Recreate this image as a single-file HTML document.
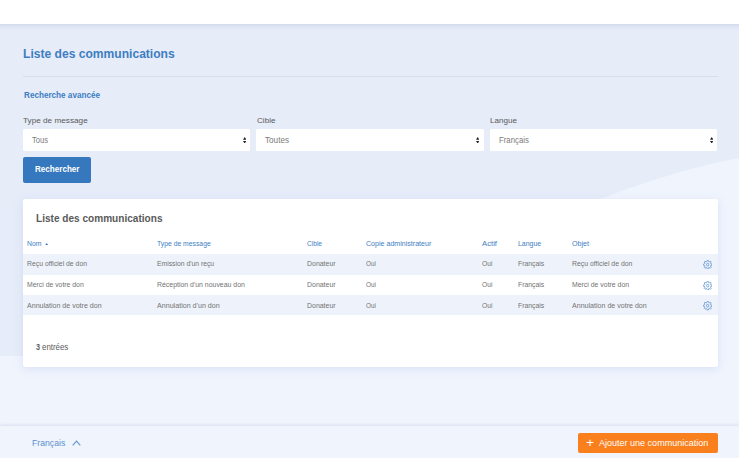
<!DOCTYPE html>
<html lang="fr">
<head>
<meta charset="utf-8">
<title>Liste des communications</title>
<style>
*{box-sizing:border-box;margin:0;padding:0}
html,body{width:739px;height:458px;overflow:hidden}
body{font-family:"Liberation Sans",sans-serif;background:#f0f4fd;position:relative}
.top{position:absolute;left:-10px;top:0;width:760px;height:23.8px;background:#fff;box-shadow:0 1px 5px rgba(120,140,180,.28)}
.dark{position:absolute;left:0;top:24px;width:739px;height:332px;background:#e6ecf8}
.curve{position:absolute;left:0;top:0;width:739px;height:458px}
.hr{position:absolute;left:23px;top:76px;width:695px;height:1px;background:#d8dfeb}
.sel{position:absolute;top:128.8px;height:22.2px;width:227.3px;background:#fff;border-radius:1.5px}
.arr{position:absolute;top:136.9px}
.btn{position:absolute;left:23px;top:157px;width:68px;height:26px;background:#3578bd;border-radius:2px}
.card{position:absolute;left:23px;top:199px;width:694.8px;height:167.5px;background:#fff;border-radius:2px;box-shadow:0 2px 8px rgba(150,170,225,.26)}
.row{position:absolute;left:23px;width:694.8px;height:20.5px;background:#eef2fb}
.gear{position:absolute;left:702.8px}
.footer{position:absolute;left:0;top:426px;width:739px;height:32px;background:#f0f4fd;box-shadow:0 -1px 3px rgba(120,140,180,.2)}
.add{position:absolute;left:578px;top:432.5px;width:140px;height:20.3px;background:#f9801d;border-radius:2px}
.t{position:absolute;white-space:nowrap;transform-origin:0 50%;display:block}
</style>
</head>
<body>
<div class="dark"></div>
<svg class="curve" viewBox="0 0 739 458"><path d="M600 199 C 650 180, 700 165, 739 158 L739 356 L600 356 Z" fill="#f0f4fd"/></svg>
<div class="top"></div>
<div class="hr"></div>
<div class="sel" style="left:23px"></div>
<div class="sel" style="left:256.4px"></div>
<div class="sel" style="left:489.9px"></div>
<svg class="arr" style="left:242.8px" width="3.4" height="6.6" viewBox="0 0 4 7" preserveAspectRatio="none"><path d="M0 2.8L2 0L4 2.8ZM0 4.2L2 7L4 4.2Z" fill="#222"/></svg>
<svg class="arr" style="left:475.9px" width="3.4" height="6.6" viewBox="0 0 4 7" preserveAspectRatio="none"><path d="M0 2.8L2 0L4 2.8ZM0 4.2L2 7L4 4.2Z" fill="#222"/></svg>
<svg class="arr" style="left:709.8px" width="3.4" height="6.6" viewBox="0 0 4 7" preserveAspectRatio="none"><path d="M0 2.8L2 0L4 2.8ZM0 4.2L2 7L4 4.2Z" fill="#222"/></svg>
<div class="btn"></div>
<div class="card"></div>
<div class="row" style="top:254.1px"></div>
<div class="row" style="top:294.9px"></div>
<svg class="gear" style="top:260.1px" width="9.4" height="9.4" viewBox="0 0 24 24" fill="none" stroke="#4a88c8" stroke-width="1.7" stroke-linejoin="round"><ellipse cx="12" cy="12" rx="3" ry="3.4"/><path d="M9.56 4.49 L10.67 0.78 L13.33 0.78 L14.44 4.49 L15.59 4.96 L19.00 3.13 L20.87 5.00 L19.04 8.41 L19.51 9.56 L23.22 10.67 L23.22 13.33 L19.51 14.44 L19.04 15.59 L20.87 19.00 L19.00 20.87 L15.59 19.04 L14.44 19.51 L13.33 23.22 L10.67 23.22 L9.56 19.51 L8.41 19.04 L5.00 20.87 L3.13 19.00 L4.96 15.59 L4.49 14.44 L0.78 13.33 L0.78 10.67 L4.49 9.56 L4.96 8.41 L3.13 5.00 L5.00 3.13 L8.41 4.96Z"/></svg>
<svg class="gear" style="top:280.8px" width="9.4" height="9.4" viewBox="0 0 24 24" fill="none" stroke="#4a88c8" stroke-width="1.7" stroke-linejoin="round"><ellipse cx="12" cy="12" rx="3" ry="3.4"/><path d="M9.56 4.49 L10.67 0.78 L13.33 0.78 L14.44 4.49 L15.59 4.96 L19.00 3.13 L20.87 5.00 L19.04 8.41 L19.51 9.56 L23.22 10.67 L23.22 13.33 L19.51 14.44 L19.04 15.59 L20.87 19.00 L19.00 20.87 L15.59 19.04 L14.44 19.51 L13.33 23.22 L10.67 23.22 L9.56 19.51 L8.41 19.04 L5.00 20.87 L3.13 19.00 L4.96 15.59 L4.49 14.44 L0.78 13.33 L0.78 10.67 L4.49 9.56 L4.96 8.41 L3.13 5.00 L5.00 3.13 L8.41 4.96Z"/></svg>
<svg class="gear" style="top:301.4px" width="9.4" height="9.4" viewBox="0 0 24 24" fill="none" stroke="#4a88c8" stroke-width="1.7" stroke-linejoin="round"><ellipse cx="12" cy="12" rx="3" ry="3.4"/><path d="M9.56 4.49 L10.67 0.78 L13.33 0.78 L14.44 4.49 L15.59 4.96 L19.00 3.13 L20.87 5.00 L19.04 8.41 L19.51 9.56 L23.22 10.67 L23.22 13.33 L19.51 14.44 L19.04 15.59 L20.87 19.00 L19.00 20.87 L15.59 19.04 L14.44 19.51 L13.33 23.22 L10.67 23.22 L9.56 19.51 L8.41 19.04 L5.00 20.87 L3.13 19.00 L4.96 15.59 L4.49 14.44 L0.78 13.33 L0.78 10.67 L4.49 9.56 L4.96 8.41 L3.13 5.00 L5.00 3.13 L8.41 4.96Z"/></svg>
<svg style="position:absolute;left:44.6px;top:243.2px" width="3.4" height="2.3" viewBox="0 0 4 3" preserveAspectRatio="none"><path d="M0 3L2 0L4 3Z" fill="#3d7ec2"/></svg>
<div class="footer"></div>
<div class="add"></div>
<svg style="position:absolute;left:71.5px;top:440px" width="9" height="6" viewBox="0 0 9 6" fill="none" stroke="#6597d2" stroke-width="1.15"><path d="M0.7 5.3L4.5 1L8.3 5.3"/></svg>
<span class="t" style="left:23.30px;top:44.00px;font-size:13.7px;line-height:19px;font-weight:bold;color:#3d7ec2;transform:scaleX(0.8825)">Liste des communications</span>
<span class="t" style="left:23.50px;top:89.00px;font-size:8.2px;line-height:13px;font-weight:bold;color:#3d7ec2;transform:scaleX(0.9939)">Recherche avancée</span>
<span class="t" style="left:23.30px;top:114.00px;font-size:8.1px;line-height:13px;color:#5a5a5a;transform:scaleX(1.0127)">Type de message</span>
<span class="t" style="left:256.50px;top:114.00px;font-size:8.1px;line-height:13px;color:#5a5a5a;transform:scaleX(1.0025)">Cible</span>
<span class="t" style="left:490.00px;top:114.00px;font-size:8.1px;line-height:13px;color:#5a5a5a;transform:scaleX(0.9994)">Langue</span>
<span class="t" style="left:32.00px;top:133.00px;font-size:8.6px;line-height:14px;color:#7b7b7b;transform:scaleX(0.8812)">Tous</span>
<span class="t" style="left:265.00px;top:133.00px;font-size:8.6px;line-height:14px;color:#7b7b7b;transform:scaleX(0.9476)">Toutes</span>
<span class="t" style="left:498.70px;top:133.00px;font-size:8.6px;line-height:14px;color:#7b7b7b;transform:scaleX(0.9073)">Français</span>
<span class="t" style="left:34.50px;top:163.00px;font-size:8.2px;line-height:13px;font-weight:bold;color:#ffffff;transform:scaleX(0.9875)">Rechercher</span>
<span class="t" style="left:35.50px;top:210.00px;font-size:10.7px;line-height:16px;font-weight:bold;color:#5a5a5a;transform:scaleX(0.9424)">Liste des communications</span>
<span class="t" style="left:27.00px;top:238.00px;font-size:7px;line-height:11px;color:#3d7ec2;transform:scaleX(0.9810)">Nom</span>
<span class="t" style="left:156.90px;top:238.00px;font-size:7px;line-height:11px;color:#3d7ec2;transform:scaleX(0.9717)">Type de message</span>
<span class="t" style="left:307.20px;top:238.00px;font-size:7px;line-height:11px;color:#3d7ec2;transform:scaleX(0.9403)">Cible</span>
<span class="t" style="left:366.30px;top:238.00px;font-size:7px;line-height:11px;color:#3d7ec2;transform:scaleX(1.0109)">Copie administrateur</span>
<span class="t" style="left:481.60px;top:238.00px;font-size:7px;line-height:11px;color:#3d7ec2;transform:scaleX(1.1009)">Actif</span>
<span class="t" style="left:518.20px;top:238.00px;font-size:7px;line-height:11px;color:#3d7ec2;transform:scaleX(0.9932)">Langue</span>
<span class="t" style="left:572.20px;top:238.00px;font-size:7px;line-height:11px;color:#3d7ec2;transform:scaleX(1.0159)">Objet</span>
<span class="t" style="left:27.30px;top:258.00px;font-size:7px;line-height:11px;color:#727272;transform:scaleX(0.9778)">Reçu officiel de don</span>
<span class="t" style="left:156.90px;top:258.00px;font-size:7px;line-height:11px;color:#727272;transform:scaleX(0.9691)">Emission d'un reçu</span>
<span class="t" style="left:307.20px;top:258.00px;font-size:7px;line-height:11px;color:#727272;transform:scaleX(0.9932)">Donateur</span>
<span class="t" style="left:366.30px;top:258.00px;font-size:7px;line-height:11px;color:#727272;transform:scaleX(0.9077)">Oui</span>
<span class="t" style="left:481.60px;top:258.00px;font-size:7px;line-height:11px;color:#727272;transform:scaleX(0.9536)">Oui</span>
<span class="t" style="left:518.20px;top:258.00px;font-size:7px;line-height:11px;color:#727272;transform:scaleX(0.9760)">Français</span>
<span class="t" style="left:572.20px;top:258.00px;font-size:7px;line-height:11px;color:#727272;transform:scaleX(0.9844)">Reçu officiel de don</span>
<span class="t" style="left:27.30px;top:279.00px;font-size:7px;line-height:11px;color:#727272;transform:scaleX(0.9778)">Merci de votre don</span>
<span class="t" style="left:156.90px;top:279.00px;font-size:7px;line-height:11px;color:#727272;transform:scaleX(0.9885)">Réception d'un nouveau don</span>
<span class="t" style="left:307.20px;top:279.00px;font-size:7px;line-height:11px;color:#727272;transform:scaleX(0.9932)">Donateur</span>
<span class="t" style="left:366.30px;top:279.00px;font-size:7px;line-height:11px;color:#727272;transform:scaleX(0.9077)">Oui</span>
<span class="t" style="left:481.60px;top:279.00px;font-size:7px;line-height:11px;color:#727272;transform:scaleX(0.9536)">Oui</span>
<span class="t" style="left:518.20px;top:279.00px;font-size:7px;line-height:11px;color:#727272;transform:scaleX(0.9760)">Français</span>
<span class="t" style="left:572.20px;top:279.00px;font-size:7px;line-height:11px;color:#727272;transform:scaleX(0.9847)">Merci de votre don</span>
<span class="t" style="left:27.30px;top:300.00px;font-size:7px;line-height:11px;color:#727272;transform:scaleX(1.0087)">Annulation de votre don</span>
<span class="t" style="left:156.90px;top:300.00px;font-size:7px;line-height:11px;color:#727272;transform:scaleX(1.0167)">Annulation d'un don</span>
<span class="t" style="left:307.20px;top:300.00px;font-size:7px;line-height:11px;color:#727272;transform:scaleX(0.9932)">Donateur</span>
<span class="t" style="left:366.30px;top:300.00px;font-size:7px;line-height:11px;color:#727272;transform:scaleX(0.9077)">Oui</span>
<span class="t" style="left:481.60px;top:300.00px;font-size:7px;line-height:11px;color:#727272;transform:scaleX(0.9536)">Oui</span>
<span class="t" style="left:518.20px;top:300.00px;font-size:7px;line-height:11px;color:#727272;transform:scaleX(0.9760)">Français</span>
<span class="t" style="left:572.20px;top:300.00px;font-size:7px;line-height:11px;color:#727272;transform:scaleX(1.0101)">Annulation de votre don</span>
<span class="t" style="left:35.50px;top:341.00px;font-size:8.2px;line-height:13px;font-weight:bold;color:#5a5a5a;transform:scaleX(0.8767)">3</span>
<span class="t" style="left:42.00px;top:341.00px;font-size:8.2px;line-height:13px;color:#5a5a5a;transform:scaleX(0.9611)">entrées</span>
<span class="t" style="left:31.75px;top:436.00px;font-size:9px;line-height:14px;color:#5b91cf;transform:scaleX(0.9633)">Français</span>
<span class="t" style="left:585.80px;top:433.00px;font-size:13px;line-height:19px;color:#ffffff;transform:scaleX(1.0798)">+</span>
<span class="t" style="left:599.00px;top:436.00px;font-size:9px;line-height:14px;color:#ffffff;transform:scaleX(1.0017)">Ajouter une communication</span>
</body>
</html>
